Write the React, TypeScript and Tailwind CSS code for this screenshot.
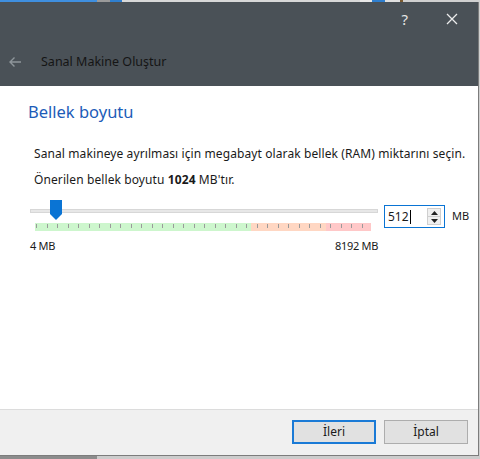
import React from "react";

const ticks = Array.from({ length: 32 }, (_, i) => 1 + i * 10.5);

export default function App() {
  return (
    <div className="w-[480px] h-[459px] flex flex-col overflow-hidden bg-[#cfcfcf] font-['Noto_Sans','Open_Sans',sans-serif] text-[#1a1a1a]">
      {/* background strip behind dialog */}
      <div className="h-[2px] flex shrink-0">
        <div className="w-[97px] bg-[#3f8fdf]" />
        <div className="w-[13px] bg-[#9a9a9a]" />
        <div className="w-[12px] bg-[#2f7fcf]" />
        <div className="w-[238px] bg-[#d8d8d8]" />
        <div className="w-[12px] bg-[#e8e8e8]" />
        <div className="w-[13px] bg-[#2f7fcf]" />
        <div className="w-[15px] bg-[#e0e0e0]" />
        <div className="w-[3px] bg-[#7a5a30]" />
        <div className="flex-1 bg-[#d0d0d0]" />
      </div>

      {/* dialog */}
      <div className="w-[479px] h-[454px] flex flex-col shrink-0 border-r border-b border-[#7c7c7c] bg-white">
        {/* title area */}
        <div className="h-[84px] bg-[#4a5157] flex flex-col shrink-0">
          <div className="h-[34px] flex items-center justify-end">
            <span className="text-[15px] text-[#e6e6e6] mr-[38px] leading-none">?</span>
            <svg width="12" height="12" viewBox="0 0 12 12" className="mr-[20px]">
              <path d="M1 1 L11 11 M11 1 L1 11" stroke="#ececec" strokeWidth="1.3" />
            </svg>
          </div>
          <div className="h-[22px] mt-[15px] flex items-center">
            <svg width="14" height="12" viewBox="0 0 14 12" className="ml-[8px]">
              <path d="M13 6 H2 M6.5 1.5 L2 6 L6.5 10.5" stroke="#8e959a" strokeWidth="1.4" fill="none" />
            </svg>
            <span className="ml-[19px] text-[12.5px] text-[#151515]">Sanal Makine Oluştur</span>
          </div>
        </div>

        {/* content */}
        <div className="flex-1 flex flex-col">
          <div className="pl-[28px] pt-[16px] text-[16.5px] leading-[20px] text-[#1c5cb8]">Bellek boyutu</div>
          <div className="pl-[34px] mt-[24px] text-[12px] leading-[16px] tracking-[0.1px]">
            Sanal makineye ayrılması için megabayt olarak bellek (RAM) miktarını seçin.
          </div>
          <div className="pl-[34px] mt-[10px] text-[12px] leading-[16px] tracking-[0.1px]">
            Önerilen bellek boyutu <b>1024</b> MB'tır.
          </div>

          {/* slider row */}
          <div className="flex items-start mt-[12px] pl-[30px]">
            <div className="w-[348px] flex flex-col">
              <div className="relative h-[34px]">
                <div className="absolute left-0 right-0 top-[9px] h-[4px] bg-[#e7e7e7] border border-[#d7d7d7]" />
                <svg width="12" height="20" viewBox="0 0 12 20" className="absolute left-[20px] top-0">
                  <path d="M0 0 H12 V14 L6 20 L0 14 Z" fill="#0a74d4" />
                </svg>
                <div className="absolute left-[5px] top-[23px] w-[336px] h-[8px] flex">
                  <div className="w-[216px] bg-[#cdf6cd]" />
                  <div className="w-[75px] bg-[#ffd7c3]" />
                  <div className="flex-1 bg-[#ffc8c8]" />
                </div>
                {ticks.map((x, i) => (
                  <div
                    key={i}
                    className="absolute top-[24px] w-px h-[4px] bg-[#9a9a9a]"
                    style={{ left: 5 + x }}
                  />
                ))}
              </div>
              <div className="flex justify-between mt-[5px] text-[11px] leading-[14px] tracking-[-0.3px]">
                <span>4 MB</span>
                <span>8192 MB</span>
              </div>
            </div>

            <div className="ml-[6px] mt-[5px] w-[61px] h-[23px] border border-[#0a74d4] flex items-center bg-white">
              <span className="ml-[3px] text-[12px] leading-none">512</span>
              <div className="w-px h-[14px] bg-black ml-[1px]" />
              <div className="ml-auto mr-[3px] w-[14px] h-[17px] flex flex-col border border-[#cfcfcf] bg-[#f0f0f0]">
                <div className="flex-1 flex items-center justify-center border-b border-[#cfcfcf]">
                  <svg width="7" height="4" viewBox="0 0 7 4"><path d="M0 4 L3.5 0 L7 4 Z" fill="#222" /></svg>
                </div>
                <div className="flex-1 flex items-center justify-center">
                  <svg width="7" height="4" viewBox="0 0 7 4"><path d="M0 0 L3.5 4 L7 0 Z" fill="#222" /></svg>
                </div>
              </div>
            </div>
            <span className="ml-[7px] mt-[9px] text-[11px] leading-[14px]">MB</span>
          </div>
        </div>

        {/* footer */}
        <div className="h-[46px] shrink-0 border-t border-[#dcdcdc] bg-[#f0f0f0] flex items-start justify-end pt-[10px] pr-[10px] gap-[8px]">
          <button className="w-[84px] h-[24px] border-2 border-[#1a7ad6] bg-[#e1e1e1] text-[12px] leading-none">İleri</button>
          <button className="w-[84px] h-[24px] border border-[#adadad] bg-[#e1e1e1] text-[12px] leading-none">İptal</button>
        </div>
      </div>

      <div className="flex-1 flex">
        <div className="w-[97px] bg-[#8c8c8c]" />
        <div className="flex-1 bg-[#cccccc]" />
      </div>
    </div>
  );
}
